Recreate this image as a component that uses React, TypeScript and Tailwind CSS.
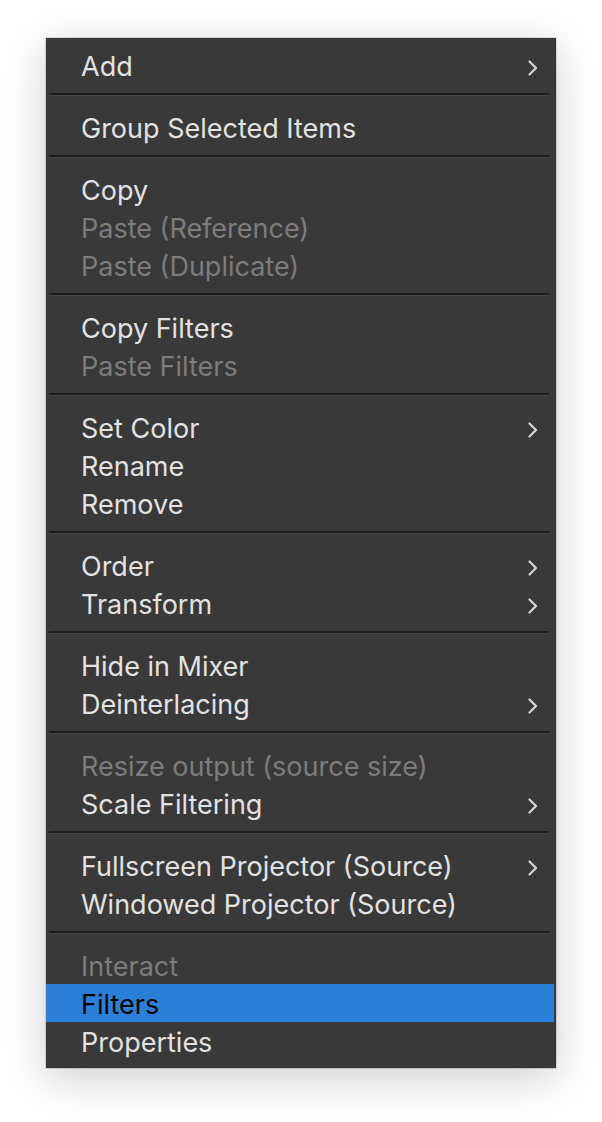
import React from 'react';

type Item = {
  label: string;
  disabled?: boolean;
  submenu?: boolean;
  active?: boolean;
};

const groups: Item[][] = [
  [{ label: 'Add', submenu: true }],
  [{ label: 'Group Selected Items' }],
  [
    { label: 'Copy' },
    { label: 'Paste (Reference)', disabled: true },
    { label: 'Paste (Duplicate)', disabled: true },
  ],
  [{ label: 'Copy Filters' }, { label: 'Paste Filters', disabled: true }],
  [{ label: 'Set Color', submenu: true }, { label: 'Rename' }, { label: 'Remove' }],
  [
    { label: 'Order', submenu: true },
    { label: 'Transform', submenu: true },
  ],
  [{ label: 'Hide in Mixer' }, { label: 'Deinterlacing', submenu: true }],
  [
    { label: 'Resize output (source size)', disabled: true },
    { label: 'Scale Filtering', submenu: true },
  ],
  [
    { label: 'Fullscreen Projector (Source)', submenu: true },
    { label: 'Windowed Projector (Source)' },
  ],
  [
    { label: 'Interact', disabled: true },
    { label: 'Filters', active: true },
    { label: 'Properties' },
  ],
];

const Chevron: React.FC<{ dark?: boolean }> = ({ dark }) => (
  <svg width="12" height="18" viewBox="0 0 12 18" fill="none" className="translate-y-[3px]">
    <path
      d="M2.5 2.5 L9 9 L2.5 15.5"
      stroke={dark ? '#111' : '#d6d6d6'}
      strokeWidth="2.2"
      strokeLinecap="round"
      strokeLinejoin="round"
    />
  </svg>
);

const Row: React.FC<{ item: Item }> = ({ item }) => {
  const color = item.active
    ? 'text-black'
    : item.disabled
    ? 'text-[#7c7c7c]'
    : 'text-[#e2e2e2]';
  return (
    <div
      className={`h-[38px] mr-[2px] flex items-center justify-between pl-[35px] pr-[15px] ${
        item.active ? 'bg-[#2a7fd9]' : ''
      }`}
    >
      <span className={`text-[27px] leading-none translate-y-[1px] ${color}`}>{item.label}</span>
      {item.submenu && <Chevron dark={item.active} />}
    </div>
  );
};

const Separator = () => (
  <div className="h-[24px] pt-[9px] ml-[3px] mr-[7px]">
    <div className="h-[2px] bg-[#1f1f1f]" />
    <div className="h-[1px] bg-[#444444]" />
  </div>
);

export default function App() {
  return (
    <div
      className="min-h-[1122px] w-[602px] bg-white pt-[38px] pl-[46px]"
      style={{ fontFamily: 'Inter, "Noto Sans", sans-serif' }}
    >
      <div className="w-[510px] bg-[#393939] py-[8px] shadow-[0_0_0_1px_rgba(0,0,0,0.12),0_10px_40px_rgba(0,0,0,0.2)]">
        {groups.map((group, gi) => (
          <React.Fragment key={gi}>
            {gi > 0 && <Separator />}
            {group.map((item) => (
              <Row key={item.label} item={item} />
            ))}
          </React.Fragment>
        ))}
      </div>
    </div>
  );
}
